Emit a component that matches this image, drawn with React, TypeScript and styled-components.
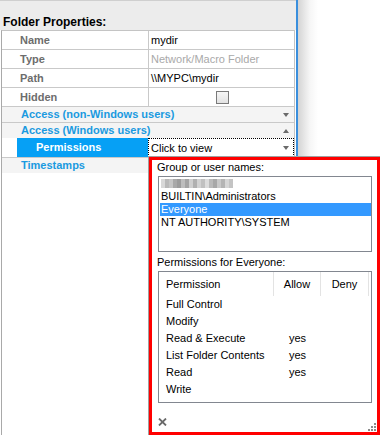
import React from "react";
import styled, { createGlobalStyle } from "styled-components";

const Global = createGlobalStyle`
  html, body { margin: 0; padding: 0; background: #fff; }
  body {
    font-family: "Liberation Sans", Arial, sans-serif;
    font-size: 11px;
    color: #000;
  }
`;

const Screen = styled.div`
  position: relative;
  width: 380px;
  height: 435px;
  overflow: hidden;
  display: flex;
  background: #fff;
`;

const Panel = styled.div`
  width: 296px;
  flex: none;
  display: flex;
  flex-direction: column;
  border-right: 2px solid #3a8fdd;
`;

const Shadow = styled.div`
  width: 20px;
  height: 156px;
  background: linear-gradient(to right, #d4d4d4, #f6f6f6 60%, #fff);
`;

const TitleBar = styled.div`
  height: 30px;
  box-sizing: border-box;
  border-top: 1px solid #cfcfcf;
  background: #ececec;
  display: flex;
  align-items: flex-end;
  padding: 0 0 1px 3px;
  font-weight: bold;
  font-size: 12px;
  line-height: 14px;
`;

const Grid = styled.div`
  flex: 1;
  margin-left: 1px;
  width: 294px;
  box-sizing: border-box;
  border-left: 1px solid #a9a9a9;
  border-top: 1px solid #c4c4c4;
  border-right: 1px solid #c4c4c4;
  display: flex;
  flex-direction: column;
`;

const PropRow = styled.div`
  display: grid;
  grid-template-columns: 147px 1fr;
  height: 19px;
  box-sizing: border-box;
  border-bottom: 1px solid #c9c9c9;
`;

const Label = styled.div`
  padding-left: 18px;
  border-right: 1px solid #c9c9c9;
  font-weight: bold;
  color: #6d6d6d;
  line-height: 18px;
`;

const Value = styled.div<{ $muted?: boolean; $center?: boolean }>`
  padding-left: 2px;
  line-height: 18px;
  color: ${(p) => (p.$muted ? "#a9a9a9" : "#000")};
  display: flex;
  align-items: center;
  justify-content: ${(p) => (p.$center ? "center" : "flex-start")};
`;

const Check = styled.div`
  width: 13px;
  height: 13px;
  box-sizing: border-box;
  border: 1px solid #7a7a7a;
  background: linear-gradient(#f6f6f6, #e2e2e2);
`;

const CategoryRow = styled.div<{ $border?: boolean }>`
  height: ${(p) => (p.$border ? 16 : 15)}px;
  box-sizing: border-box;
  border-bottom: ${(p) => (p.$border ? "1px solid #c9c9c9" : "none")};
  background: #f4f4f4;
  display: flex;
  align-items: center;
  justify-content: space-between;
  padding: 0 5px 0 19px;
  color: #1a9ae0;
  font-weight: bold;
  line-height: 15px;
`;

const Arrow = styled.span<{ $up?: boolean }>`
  width: 0;
  height: 0;
  border-left: 3.5px solid transparent;
  border-right: 3.5px solid transparent;
  ${(p) =>
    p.$up ? "border-bottom: 4px solid #6a6a6a;" : "border-top: 4px solid #6a6a6a;"}
`;

const SelectedRow = styled.div`
  display: grid;
  grid-template-columns: 15px 131px 1fr;
  height: 20px;
  box-sizing: border-box;
  border-bottom: 1px solid #c9c9c9;
`;

const Indent = styled.div`
  background: #fff;
`;

const SelectedLabel = styled.div`
  background: #06a0f5;
  color: #fff;
  font-weight: bold;
  padding-left: 19px;
  line-height: 19px;
`;

const FocusValue = styled.div`
  border: 1px dotted #000;
  display: flex;
  align-items: center;
  justify-content: space-between;
  padding: 0 4px 0 2px;
`;

const Popup = styled.div`
  position: absolute;
  left: 148px;
  top: 156px;
  width: 232px;
  height: 279px;
  box-sizing: border-box;
  border-top: 1px solid #a0a0a0;
  border-left: 1px solid #a0a0a0;
  background: #fff;
`;

const Highlight = styled.div`
  position: relative;
  height: 100%;
  box-sizing: border-box;
  border: 3px solid #ff0000;
  display: flex;
  flex-direction: column;
`;

const Caption = styled.div<{ $top: number }>`
  padding-left: 5px;
  margin-top: ${(p) => p.$top}px;
  line-height: 14px;
`;

const ListBox = styled.div`
  margin: 2px 0 0 6px;
  width: 214px;
  height: 76px;
  box-sizing: border-box;
  border: 1px solid #828790;
  padding: 0 0 0 1px;
`;

const Item = styled.div<{ $selected?: boolean }>`
  height: 13px;
  line-height: 13px;
  padding-left: 1px;
  background: ${(p) => (p.$selected ? "#3399ff" : "transparent")};
  color: ${(p) => (p.$selected ? "#fff" : "#000")};
  display: flex;
  align-items: center;
`;

const Blur = styled.div`
  display: flex;
  height: 9px;
`;

const Pixel = styled.span<{ $c: string }>`
  width: 4px;
  height: 9px;
  background: ${(p) => p.$c};
`;

const PermBox = styled.div`
  margin: 2px 0 0 6px;
  width: 214px;
  height: 132px;
  box-sizing: border-box;
  border: 1px solid #828790;
`;

const PermHeader = styled.div`
  display: grid;
  grid-template-columns: 115px 47px 48px 1fr;
  height: 24px;
`;

const HeadCell = styled.div<{ $center?: boolean; $last?: boolean }>`
  border-right: ${(p) => (p.$last ? "none" : "1px solid #e3e3e3")};
  display: flex;
  align-items: center;
  justify-content: ${(p) => (p.$center ? "center" : "flex-start")};
  padding-left: ${(p) => (p.$center ? 0 : 7)}px;
`;

const PermRow = styled.div`
  display: grid;
  grid-template-columns: 115px 47px 48px 1fr;
  height: 17px;
  line-height: 17px;
`;

const PermCell = styled.div<{ $center?: boolean }>`
  text-align: ${(p) => (p.$center ? "center" : "left")};
  padding-left: ${(p) => (p.$center ? 0 : 7)}px;
  white-space: nowrap;
`;

const Footer = styled.div`
  flex: 1;
  display: flex;
  align-items: flex-end;
  padding: 0 0 6px 6px;
`;

const Grip = styled.svg`
  position: absolute;
  right: 0;
  bottom: 0;
`;

const blurColors = [
  "#d8d8d8", "#b9b9b9", "#c6c6c6", "#a9a9a9", "#9c9c9c", "#bdbdbd",
  "#a4a4a4", "#cfcfcf", "#b0b0b0", "#d2d2d2", "#c0c0c0", "#dcdcdc",
  "#bababa", "#a8a8a8", "#c9c9c9", "#b4b4b4", "#d6d6d6", "#c4c4c4",
];

const perms: [string, string][] = [
  ["Full Control", ""],
  ["Modify", ""],
  ["Read & Execute", "yes"],
  ["List Folder Contents", "yes"],
  ["Read", "yes"],
  ["Write", ""],
];

export default function App() {
  return (
    <>
      <Global />
      <Screen>
        <Panel>
          <TitleBar>Folder Properties:</TitleBar>
          <Grid>
            <PropRow>
              <Label>Name</Label>
              <Value>mydir</Value>
            </PropRow>
            <PropRow>
              <Label>Type</Label>
              <Value $muted>Network/Macro Folder</Value>
            </PropRow>
            <PropRow>
              <Label>Path</Label>
              <Value>\\MYPC\mydir</Value>
            </PropRow>
            <PropRow>
              <Label>Hidden</Label>
              <Value $center>
                <Check />
              </Value>
            </PropRow>
            <CategoryRow $border>
              <span>Access (non-Windows users)</span>
              <Arrow />
            </CategoryRow>
            <CategoryRow>
              <span>Access (Windows users)</span>
              <Arrow $up />
            </CategoryRow>
            <SelectedRow>
              <Indent />
              <SelectedLabel>Permissions</SelectedLabel>
              <FocusValue>
                <span>Click to view</span>
                <Arrow />
              </FocusValue>
            </SelectedRow>
            <CategoryRow>
              <span>Timestamps</span>
            </CategoryRow>
          </Grid>
        </Panel>
        <Shadow />
        <Popup>
          <Highlight>
            <Caption $top={0}>Group or user names:</Caption>
            <ListBox>
              <Item>
                <Blur>
                  {blurColors.map((c, i) => (
                    <Pixel key={i} $c={c} />
                  ))}
                </Blur>
              </Item>
              <Item>BUILTIN\Administrators</Item>
              <Item $selected>Everyone</Item>
              <Item>NT AUTHORITY\SYSTEM</Item>
            </ListBox>
            <Caption $top={3}>Permissions for Everyone:</Caption>
            <PermBox>
              <PermHeader>
                <HeadCell>Permission</HeadCell>
                <HeadCell $center>Allow</HeadCell>
                <HeadCell $center>Deny</HeadCell>
                <HeadCell $last />
              </PermHeader>
              {perms.map(([name, allow]) => (
                <PermRow key={name}>
                  <PermCell>{name}</PermCell>
                  <PermCell $center>{allow}</PermCell>
                  <PermCell $center />
                  <PermCell />
                </PermRow>
              ))}
            </PermBox>
            <Footer>
              <svg width="9" height="8" viewBox="0 0 9 8">
                <path d="M1 0.5 L8 7.5 M8 0.5 L1 7.5" stroke="#6a6a6a" strokeWidth="1.8" />
              </svg>
            </Footer>
            <Grip width="10" height="10" viewBox="0 0 10 10">
              <g fill="#8a8a8a">
                <rect x="7" y="1" width="2" height="2" />
                <rect x="4" y="4" width="2" height="2" />
                <rect x="7" y="4" width="2" height="2" />
                <rect x="1" y="7" width="2" height="2" />
                <rect x="4" y="7" width="2" height="2" />
                <rect x="7" y="7" width="2" height="2" />
              </g>
            </Grip>
          </Highlight>
        </Popup>
      </Screen>
    </>
  );
}
